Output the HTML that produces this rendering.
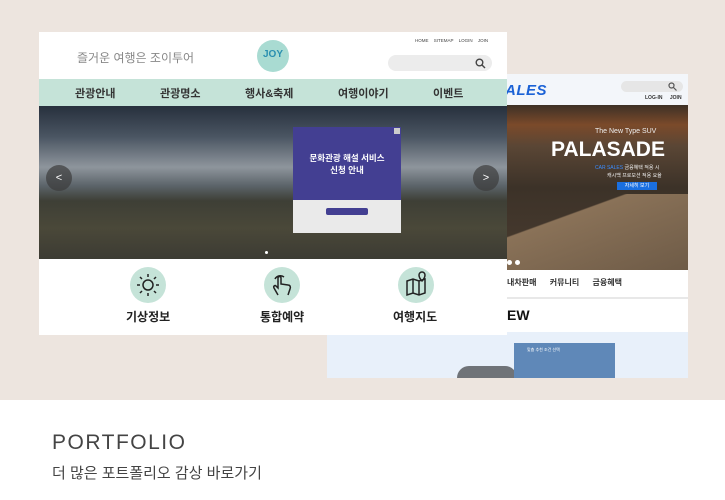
<!DOCTYPE html>
<html><head><meta charset="utf-8"><style>
*{margin:0;padding:0;box-sizing:border-box}
body{width:725px;height:500px;overflow:hidden;background:#fff;font-family:"Liberation Sans","Noto Sans CJK KR",sans-serif;position:relative}
.bg{position:absolute;left:0;top:0;width:725px;height:400px;background:#ede5df}
.abs{position:absolute}
</style></head><body>
<div class="bg"></div>
<!-- back site -->
<div class="abs" style="left:327px;top:74px;width:361px;height:304px;background:#fff;overflow:hidden">
 <div class="abs" style="left:0;top:0;width:361px;height:31px;background:#f3f6fa"></div>
 <div class="abs" style="left:178px;top:8px;font:italic 900 15px 'Liberation Sans';color:#1b62d6;letter-spacing:0.5px">ALES</div>
 <div class="abs" style="left:294px;top:7px;width:62px;height:11px;border-radius:6px;background:#e6e6e6"></div>
 <svg class="abs" style="left:341px;top:8px" width="9" height="9" fill="none" stroke="#555" stroke-width="1.2"><circle cx="3.5" cy="3.5" r="2.5"/><path d="M5.5 5.5l3 3"/></svg>
 <div class="abs" style="left:318px;top:21px;font-size:5px;color:#333;font-weight:bold;word-spacing:6px">LOG-IN JOIN</div>
 <div class="abs" style="left:0;top:31px;width:361px;height:165px;background:linear-gradient(180deg,#3d3026 0%,#7b4a2a 12%,#5a4635 25%,#3c3228 50%,#4a3c30 100%)"></div>
 <div class="abs" style="left:180px;top:120px;width:181px;height:76px;background:linear-gradient(160deg,transparent 30%,#8a7258 31%,#6e5b47 100%)"></div>
 <div class="abs" style="left:268px;top:54px;font-size:7px;color:#eee">The New Type SUV</div>
 <div class="abs" style="left:224px;top:64px;font:900 21px 'Liberation Sans';color:#fff">PALASADE</div>
 <div class="abs" style="left:268px;top:90px;font-size:5px;color:#eee"><span style="color:#3a8cff">CAR SALES</span> 금융혜택 적용 시</div>
 <div class="abs" style="left:280px;top:98px;font-size:5px;color:#eee">캐시백 프로모션 적용 요율</div>
 <div class="abs" style="left:290px;top:108px;width:40px;height:8px;background:#1a6fe0;font-size:5px;color:#fff;text-align:center;line-height:8px">자세히 보기</div>
 <div class="abs" style="left:180px;top:186px;width:5px;height:5px;border-radius:50%;background:#fff"></div>
 <div class="abs" style="left:188px;top:186px;width:5px;height:5px;border-radius:50%;background:#fff"></div>
 <div class="abs" style="left:180px;top:203px;font-size:8px;color:#333;font-weight:bold">내차판매&nbsp;&nbsp;&nbsp;&nbsp;&nbsp;&nbsp;커뮤니티&nbsp;&nbsp;&nbsp;&nbsp;&nbsp;&nbsp;금융혜택</div>
 <div class="abs" style="left:180px;top:223px;width:181px;height:2px;background:#e8e8e8"></div>
 <div class="abs" style="left:180px;top:233px;font:900 14px 'Liberation Sans';color:#111">EW</div>
 <div class="abs" style="left:0;top:258px;width:361px;height:46px;background:#e8f0fa"></div>
 <div class="abs" style="left:130px;top:292px;width:60px;height:12px;border-radius:20px 20px 0 0;background:#6f7378"></div>
 <div class="abs" style="left:187px;top:269px;width:101px;height:35px;background:#5f88b8"></div>
 <div class="abs" style="left:200px;top:273px;font-size:4px;color:#fff">맞춤 추천 조건 선택</div>
</div>
<!-- front site -->
<div class="abs" style="left:39px;top:32px;width:468px;height:303px;background:#fff;overflow:hidden">
 <div class="abs" style="left:38px;top:17px;font-size:12px;color:#888">즐거운 여행은 조이투어</div>
 <div class="abs" style="left:218px;top:8px;width:32px;height:32px;border-radius:50%;background:#a9dbd2;text-align:center;font:bold 10px 'Liberation Sans';color:#2a8fb0;line-height:30px">JOY</div>
 <div class="abs" style="left:376px;top:6px;font-size:4.5px;color:#444;word-spacing:4px">HOME SITEMAP LOGIN JOIN</div>
 <div class="abs" style="left:349px;top:23px;width:104px;height:16px;border-radius:8px;background:#ececec"></div>
 <svg class="abs" style="left:436px;top:26px" width="11" height="11" fill="none" stroke="#444" stroke-width="1.4"><circle cx="4.5" cy="4.5" r="3.3"/><path d="M7 7l3 3"/></svg>
 <div class="abs" style="left:0;top:47px;width:468px;height:27px;background:#c5e3d8"></div>
 <div class="abs" style="left:0;top:53px;width:468px;font-size:11px;font-weight:bold;color:#333">
  <span class="abs" style="left:36px">관광안내</span><span class="abs" style="left:121px">관광명소</span><span class="abs" style="left:206px">행사&amp;축제</span><span class="abs" style="left:299px">여행이야기</span><span class="abs" style="left:394px">이벤트</span></div>
 <div class="abs" style="left:0;top:74px;width:468px;height:153px;background:linear-gradient(180deg,#27303d 0%,#4a5562 20%,#8e959c 40%,#5c646a 52%,#3e3f36 62%,#4a4839 80%,#3c3b33 100%)"></div>
 <div class="abs" style="left:7px;top:133px;width:26px;height:26px;border-radius:50%;background:rgba(60,60,60,.7);color:#fff;font-size:11px;text-align:center;line-height:26px">&lt;</div>
 <div class="abs" style="left:434px;top:133px;width:26px;height:26px;border-radius:50%;background:rgba(60,60,60,.7);color:#fff;font-size:11px;text-align:center;line-height:26px">&gt;</div>
 <div class="abs" style="left:254px;top:95px;width:108px;height:106px;background:#eaeaea"></div>
 <div class="abs" style="left:254px;top:95px;width:108px;height:73px;background:#433f92"></div>
 <div class="abs" style="left:355px;top:96px;width:6px;height:6px;background:#ccc"></div>
 <div class="abs" style="left:254px;top:120px;width:108px;text-align:center;font-size:8.5px;font-weight:bold;color:#fff;line-height:12px">문화관광 해설 서비스<br>신청 안내</div>
 <div class="abs" style="left:287px;top:176px;width:42px;height:7px;border-radius:2px;background:#433f92"></div>
 <div class="abs" style="left:226px;top:219px;width:3px;height:3px;border-radius:50%;background:#fff"></div>
 <div class="abs" style="left:0;top:227px;width:468px;height:76px;background:#fff"></div>
 <div class="abs" style="left:91px;top:235px;width:36px;height:36px;border-radius:50%;background:#c5e3d8"></div>
 <div class="abs" style="left:225px;top:235px;width:36px;height:36px;border-radius:50%;background:#c5e3d8"></div>
 <div class="abs" style="left:359px;top:235px;width:36px;height:36px;border-radius:50%;background:#c5e3d8"></div>
 <svg class="abs" style="left:91px;top:235px" width="36" height="36" fill="none" stroke="#222" stroke-width="1.5"><circle cx="18" cy="18" r="5"/><path d="M18 7v3M18 26v3M7 18h3M26 18h3M10 10l2 2M24 24l2 2M10 26l2-2M24 12l2-2"/></svg>
 <svg class="abs" style="left:225px;top:235px" width="36" height="36" fill="none" stroke="#222" stroke-width="1.5"><path d="M14 28l-4-7c-1-2 1-3 2-2l2 2V11c0-2 3-2 3 0v6l7 1c2 0 3 2 2 4l-2 6M11 12a6 6 0 0 1 9-2"/></svg>
 <svg class="abs" style="left:359px;top:235px" width="36" height="36" fill="none" stroke="#222" stroke-width="1.5"><path d="M9 14l6-2 6 2 6-2v14l-6 2-6-2-6 2zM15 12v14M21 14v14"/><path d="M24 14c-3-3-3-5-3-6a3 3 0 0 1 6 0c0 1 0 3-3 6z"/></svg>
 <div class="abs" style="left:87px;top:276px;font-size:12px;font-weight:bold;color:#222">기상정보</div>
 <div class="abs" style="left:221px;top:276px;font-size:12px;font-weight:bold;color:#222">통합예약</div>
 <div class="abs" style="left:354px;top:276px;font-size:12px;font-weight:bold;color:#222">여행지도</div>
</div>
<div class="abs" style="left:52px;top:431px;font-size:21px;color:#444;letter-spacing:1.5px">PORTFOLIO</div>
<div class="abs" style="left:52px;top:462px;font-size:15px;color:#444">더 많은 포트폴리오 감상 바로가기</div>
</body></html>
